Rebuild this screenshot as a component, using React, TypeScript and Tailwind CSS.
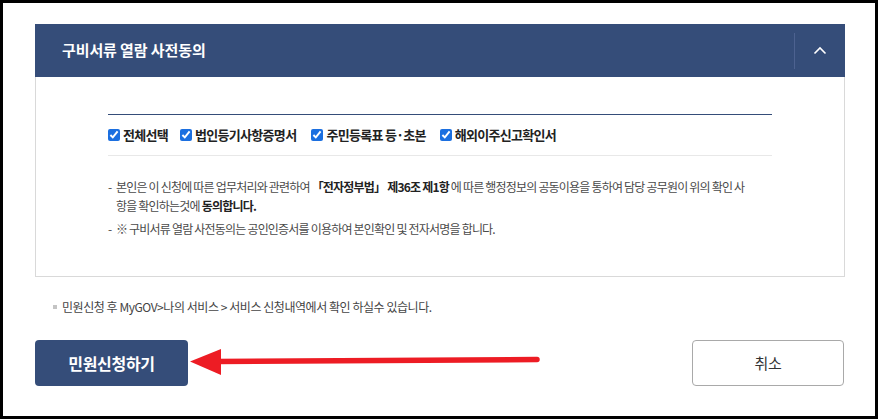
import React from "react";

const KR = { fontFamily: '"Noto Sans CJK KR", "Noto Sans", sans-serif' };

function Check({ label }: { label: string }) {
  return (
    <label className="flex items-center gap-[3px] whitespace-nowrap">
      <input
        type="checkbox"
        defaultChecked
        className="m-0 h-[12px] w-[12px] accent-[#1b6fe0]"
      />
      <span className="text-[13px] font-bold tracking-[-0.7px] text-[#222]">{label}</span>
    </label>
  );
}

export default function App() {
  return (
    <div
      className="relative box-border h-[419px] w-[878px] overflow-hidden border-[3px] border-black bg-white pl-[32px] pt-[21px]"
      style={KR}
    >
      {/* Panel */}
      <div className="w-[810px]">
        <div className="flex h-[53px] items-center bg-[#354d79]">
          <div className="flex-1 pl-[27px] text-[15px] font-bold tracking-[-0.1px] text-white">
            구비서류 열람 사전동의
          </div>
          <div className="h-[36px] w-px bg-[#4d6290]" />
          <div className="flex w-[50px] justify-center">
            <svg width="14" height="9" viewBox="0 0 14 9" fill="none">
              <path d="M1.5 7.5 L7 2 L12.5 7.5" stroke="white" strokeWidth="1.6" />
            </svg>
          </div>
        </div>
        <div className="box-border h-[200px] border-x border-b border-[#d9d9d9] px-[72px] pt-[37px]">
          <div className="h-px bg-[#354d79]" />
          <div className="flex h-[40px] items-center gap-[12px]">
            <Check label="전체선택" />
            <Check label="법인등기사항증명서" />
            <div className="ml-[3px]">
              <Check label="주민등록표 등·초본" />
            </div>
            <div className="ml-[2px]">
              <Check label="해외이주신고확인서" />
            </div>
          </div>
          <div className="h-px bg-[#e8e8e8]" />
          <div className="mt-[21px] text-[12px] leading-[19px] tracking-[-0.8px] text-[#4a4a4a]">
            <div className="flex">
              <span className="w-[8px] shrink-0">-</span>
              <span className="whitespace-nowrap">
                본인은 이 신청에 따른 업무처리와 관련하여{" "}
                <b className="text-[#222]">「전자정부법」 제36조 제1항</b> 에 따른 행정정보의 공동이용을 통하여 담당 공무원이 위의 확인 사
                <br />
                항을 확인하는것에 <b className="text-[#222]">동의합니다.</b>
              </span>
            </div>
            <div className="mt-[4px] flex">
              <span className="w-[8px] shrink-0">-</span>
              <span className="whitespace-nowrap">
                ※ 구비서류 열람 사전동의는 공인인증서를 이용하여 본인확인 및 전자서명을 합니다.
              </span>
            </div>
          </div>
        </div>
      </div>

      {/* Note */}
      <div className="ml-[18px] mt-[21px] flex h-[18px] items-center gap-[5px]">
        <span className="h-[4px] w-[4px] bg-[#c4c4c4]" />
        <span className="whitespace-nowrap text-[12px] tracking-[-0.45px] text-[#444]">
          민원신청 후 MyGOV&gt;나의 서비스 &gt; 서비스 신청내역에서 확인 하실수 있습니다.
        </span>
      </div>

      {/* Buttons */}
      <div className="mt-[24px] flex w-[810px] justify-between">
        <button className="flex h-[46px] w-[153px] items-center justify-center rounded-[4px] bg-[#354d79] text-[16px] font-bold tracking-[-0.3px] text-white">
          민원신청하기
        </button>
        <button className="box-border mr-px flex h-[46px] w-[152px] items-center justify-center rounded-[4px] border border-[#a9a9a9] bg-white text-[15px] tracking-[-0.3px] text-[#333]">
          취소
        </button>
      </div>

      {/* Red annotation arrow */}
      <svg
        className="pointer-events-none absolute left-[-3px] top-[-3px]"
        width="878"
        height="419"
        viewBox="0 0 878 419"
      >
        <line x1="216" y1="361.5" x2="537" y2="359.5" stroke="#ed1c24" strokeWidth="5.5" strokeLinecap="round" />
        <polygon points="190,361.5 221,349 221,375" fill="#ed1c24" />
      </svg>
    </div>
  );
}
